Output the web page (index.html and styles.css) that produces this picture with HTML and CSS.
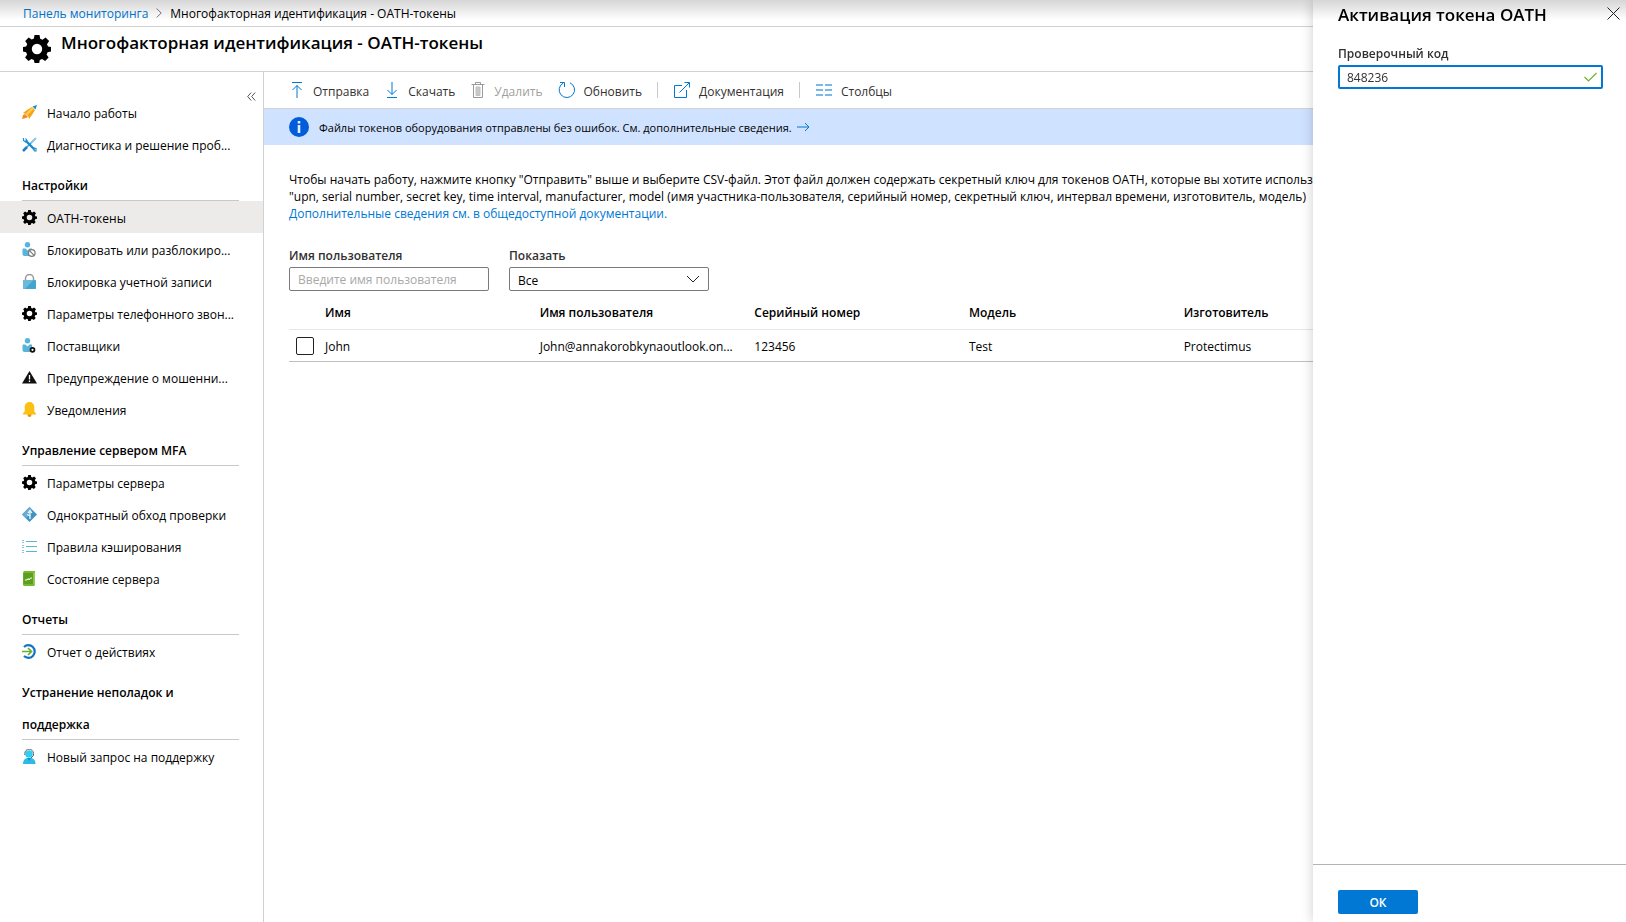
FILE: index.html
```html
<!DOCTYPE html>
<html lang="ru">
<head>
<meta charset="utf-8">
<title>Многофакторная идентификация - OATH-токены</title>
<link rel="stylesheet" href="styles.css">
</head>
<body>
<svg class="defs" width="0" height="0" aria-hidden="true">
  <defs>
    <symbol id="gear" viewBox="0 0 28 28">
      <path fill-rule="evenodd" d="M11.500 0h5l.7 3.700 2.300 1 3.100-2.100 3.500 3.500-2.100 3.100 1 2.300 3 .5v4.500l-3.400.8-1 2.300 2 3-3.500 3.500-3-2-2.300 1-.6 2.900h-4.600l-.8-3.100-2.300-1-3 2.100-3.400-3.500 2-3-1-2.300L0 16.500V12l3.200-.6 1-2.300-2-3 3.500-3.500 3 2 2.200-1zM14 8.800a5.200 5.200 0 1 0 0 10.400 5.200 5.200 0 0 0 0-10.400z"/>
    </symbol>
    <symbol id="person" viewBox="0 0 15 15">
      <circle cx="5.500" cy="2.800" r="2.700" fill="#59b4d9"/>
      <path d="M1 6.500h2.500l2 2 2-2H10v3L8 14H2.500Q.5 14 .5 12V7z" fill="#59b4d9"/>
    </symbol>
  </defs>
</svg>
<div class="page">
  <nav class="crumbs" aria-label="Навигация">
    <a href="#">Панель мониторинга</a>
    <svg width="6" height="10" viewBox="0 0 6 10" fill="none" stroke="#777"><path d="M.7.5 5.200 5 .7 9.500"/></svg>
    <span>Многофакторная идентификация - OATH-токены</span>
  </nav>
  <header class="title">
    <svg width="28" height="28"><use href="#gear"/></svg>
    <h1>Многофакторная идентификация - OATH-токены</h1>
  </header>
  <div class="body">
    <aside class="side">
      <button class="collapse" type="button" aria-label="Свернуть меню"><svg width="9" height="9" viewBox="0 0 9 9" fill="none" stroke="#555"><path d="M4.200.5.700 4.500l3.500 4M8.200.5 4.700 4.500l3.500 4"/></svg></button>
      <ul>
        <li><a href="#"><svg width="15" height="15" viewBox="0 0 15 15"><path d="M1 8l4-3 5-3 3 3-3 5-3 4-1-3-2-2z" fill="#faa21b"/><path d="M0 14l1-4 2-1 3 3-2 1z" fill="#f28a1c"/><path d="M5 9 11 3" stroke="#ffd34d" stroke-width="2"/><path d="M10.500 1.500 15 0l-1.500 4.500z" fill="#1f8fb8"/></svg><span>Начало работы</span></a></li>
        <li><a href="#"><svg width="15" height="15" viewBox="0 0 15 15" fill="none"><path d="M2 13 13 2" stroke="#3aa5dc" stroke-width="1.500"/><path d="M9.500 5.500 14 1" stroke="#8fc9e6" stroke-width="2"/><path d="M3.500 3.500l9 9" stroke="#1988d0" stroke-width="2.400"/><path d="M1.500 1v2.500l2 1.500L5 3.500 3.500 1.500M11.500 12l1 2h1.500v-2.500l-2-.5" stroke="#1f8ed2" stroke-width="1.200"/><path d="M1 14l4-4" stroke="#1b7fc9" stroke-width="2.500"/></svg><span>Диагностика и решение проб...</span></a></li>
      </ul>
      <h2>Настройки</h2>
      <ul>
        <li class="current"><a href="#" aria-current="page"><svg width="15" height="15"><use href="#gear"/></svg><span>OATH-токены</span></a></li>
        <li><a href="#"><svg width="15" height="15" viewBox="0 0 15 15"><use href="#person"/><circle cx="9.800" cy="11" r="3.300" fill="#fff" stroke="#7a7a7a" stroke-width="1.200"/><path d="M7.500 8.700l4.600 4.600" stroke="#7a7a7a" stroke-width="1.200"/></svg><span>Блокировать или разблокиро...</span></a></li>
        <li><a href="#"><svg width="15" height="15" viewBox="0 0 15 15"><path d="M3.500 7V4.500a4 4 0 0 1 8 0V7" fill="none" stroke="#999" stroke-width="1.500"/><path d="M1.500 6h12l.5.5v8l-.5.500h-12L1 14.500v-8z" fill="#3fa6d0"/><path d="M1.500 6h10L3 15H1.500L1 14.500v-8z" fill="#6bbadb"/></svg><span>Блокировка учетной записи</span></a></li>
        <li><a href="#"><svg width="15" height="15"><use href="#gear"/></svg><span>Параметры телефонного звон...</span></a></li>
        <li><a href="#"><svg width="15" height="15" viewBox="0 0 15 15"><use href="#person"/><circle cx="10.500" cy="11.800" r="2" fill="#fff" stroke="#111" stroke-width="1.700"/></svg><span>Поставщики</span></a></li>
        <li><a href="#"><svg width="15" height="15" viewBox="0 0 15 15"><path d="M7.500 1 15 13.500H0z" fill="#111"/><path d="M7.500 5v4.500M7.500 10.500V12" stroke="#fff" stroke-width="1.300"/></svg><span>Предупреждение о мошенни...</span></a></li>
        <li><a href="#"><svg width="15" height="15" viewBox="0 0 15 15"><circle cx="7.500" cy="13" r="2" fill="#e8960c"/><path d="M7.500 0a4.800 4.800 0 0 1 4.800 5v4.500L14 11.500v1H1v-1l1.700-2V5a4.800 4.800 0 0 1 4.800-5z" fill="#fcc014"/></svg><span>Уведомления</span></a></li>
      </ul>
      <h2>Управление сервером MFA</h2>
      <ul>
        <li><a href="#"><svg width="15" height="15"><use href="#gear"/></svg><span>Параметры сервера</span></a></li>
        <li><a href="#"><svg width="15" height="15" viewBox="0 0 15 15"><path d="M7.500 0 15 7.500 7.500 15 0 7.500z" fill="#3c94c4"/><path d="M7.500 0 0 7.500l4 4L10 2.500z" fill="#68acd2"/><path d="M8 12V5M6 6l2-2.500L10 6M8 9 5 7.500" stroke="#fff" fill="none" stroke-width="1.200"/></svg><span>Однократный обход проверки</span></a></li>
        <li><a href="#"><svg width="15" height="15" viewBox="0 0 15 15" fill="none" stroke="#59b4d9"><path d="M4 2.500h11M4 7.500h11M4 12.500h11"/><path d="M1 1v3M1 6v3M1 11v3" stroke-dasharray="1 1" stroke-width="1.500"/></svg><span>Правила кэширования</span></a></li>
        <li><a href="#"><svg width="15" height="15" viewBox="0 0 15 15"><path d="M1 1.500 2 0h11v14l-1 1H2l-1-1z" fill="#76b82a"/><path d="M1.500 2h10v11h-10z" fill="#5aa01e"/><path d="M12 1.500v12" stroke="#b5dc80"/><path d="M3 9h2l1.200-1.500L7 9l1.500-2H10" stroke="#fff" fill="none"/></svg><span>Состояние сервера</span></a></li>
      </ul>
      <h2>Отчеты</h2>
      <ul>
        <li><a href="#"><svg width="15" height="15" viewBox="0 0 15 15" fill="none" stroke-width="2.200"><path d="M2 3a6.300 6.300 0 1 1 0 9" stroke="#1073c6"/><path d="M0 7.500h9M6 4l3.500 3.500L6 11" stroke="#6bb02c" stroke-width="1.700"/></svg><span>Отчет о действиях</span></a></li>
      </ul>
      <h2>Устранение неполадок и<br>поддержка</h2>
      <ul>
        <li><a href="#"><svg width="15" height="15" viewBox="0 0 15 15"><path d="M1 15q0-5 4-6h4.500q4 1 4 6z" fill="#2cbbe6"/><circle cx="7" cy="5" r="3.800" fill="#32cdf5"/><path d="M2.800 6V4.500a4.300 4.300 0 0 1 8.700 0V6.500L9 9" stroke="#666" fill="none"/><path d="M5.500 9h3.500L7.200 12z" fill="#1490c8"/></svg><span>Новый запрос на поддержку</span></a></li>
      </ul>
    </aside>
    <main class="main">
      <div class="tools" role="toolbar">
        <button type="button"><svg width="16" height="18" viewBox="0 0 16 18" fill="none" stroke="#0078d4"><path d="M3 1.500h10M8 4.500V17M3.500 9 8 4.500 12.500 9"/></svg>Отправка</button>
        <button type="button"><svg width="16" height="18" viewBox="0 0 16 18" fill="none" stroke="#0078d4"><path d="M3 16.500h10M8 1v12.500M3.500 9 8 13.500 12.500 9"/></svg>Скачать</button>
        <button type="button" disabled><svg width="16" height="18" viewBox="0 0 16 18" fill="none" stroke="#999"><path d="M1.500 3.500h13M5.500 3V1.500h5V3M3.500 4v12.500h9V4"/><path d="M6 6h4v8.500H6z" fill="#c8c8c8" stroke="#c0c0c0"/></svg>Удалить</button>
        <button type="button"><svg width="18" height="18" viewBox="0 0 18 18" fill="none" stroke="#0078d4"><path d="M12 1.800A7.700 7.700 0 1 1 5.300 2M2 1.500h4.500V6"/></svg>Обновить</button>
        <i class="rule"></i>
        <button type="button"><svg width="18" height="18" viewBox="0 0 18 18" fill="none" stroke="#0078d4"><path d="M9 4.500H1.500v12h12V9M6.500 11.500 16.500 1.500M11.500 1.500h5v5"/></svg>Документация</button>
        <i class="rule"></i>
        <button type="button"><svg width="18" height="18" viewBox="0 0 18 18" fill="none" stroke="#7ab8ea" stroke-width="2"><path d="M1 4h7M1 9h7M1 14h7M10 4h7M10 9h7M10 14h7"/></svg>Столбцы</button>
      </div>
      <div class="notice" role="status">
        <svg width="20" height="20" viewBox="0 0 20 20"><circle cx="10" cy="10" r="10" fill="#015cda"/><path d="M8.700 8h2.600v8H8.700zM8.700 4h2.600v2.500H8.700z" fill="#e4eefc"/></svg>
        <a href="#">Файлы токенов оборудования отправлены без ошибок. См. дополнительные сведения.</a>
        <svg class="arrow" width="13" height="10" viewBox="0 0 13 10" fill="none" stroke="#0078d4"><path d="M0 5h12M8 1l4 4-4 4"/></svg>
      </div>
      <div class="content">
        <p>Чтобы начать работу, нажмите кнопку "Отправить" выше и выберите CSV-файл. Этот файл должен содержать секретный ключ для токенов OATH, которые вы хотите использовать.<br>"upn, serial number, secret key, time interval, manufacturer, model (имя участника-пользователя, серийный номер, секретный ключ, интервал времени, изготовитель, модель)<br><a href="#">Дополнительные сведения см. в общедоступной документации.</a></p>
        <form class="filters">
          <div class="field"><label for="user">Имя пользователя</label><input id="user" type="text" placeholder="Введите имя пользователя"></div>
          <div class="field"><label for="show">Показать</label><select id="show"><option>Все</option></select></div>
        </form>
        <table>
          <thead><tr><th class="pick"></th><th>Имя</th><th>Имя пользователя</th><th>Серийный номер</th><th>Модель</th><th>Изготовитель</th><th></th></tr></thead>
          <tbody><tr><td class="pick"><input type="checkbox" aria-label="Выбрать John"></td><td>John</td><td>John@annakorobkynaoutlook.on...</td><td>123456</td><td>Test</td><td>Protectimus</td><td></td></tr></tbody>
        </table>
      </div>
    </main>
  </div>
</div>
<section class="panel" aria-labelledby="panel-title">
  <header><h2 id="panel-title">Активация токена OATH</h2><button type="button" aria-label="Закрыть"><svg width="13" height="13" viewBox="0 0 13 13" stroke="#222"><path d="M.5.5l12 12M12.500.5l-12 12"/></svg></button></header>
  <div class="panel-body">
    <label for="code">Проверочный код</label>
    <div class="code"><input id="code" type="text" value="848236"><svg width="13" height="10" viewBox="0 0 13 10" fill="none" stroke="#6bb52c" stroke-width="1.200"><path d="M.5 5l4 4L12.500 1"/></svg></div>
  </div>
  <footer><button type="button">ОК</button></footer>
</section>
<div class="topshade"></div>
</body>
</html>
```

FILE: styles.css
```css
* { box-sizing: border-box; }
body {
  margin: 0;
  background: #fff;
  color: #000;
  font: 12px/17px "Open Sans", "Noto Sans", sans-serif;
  overflow: hidden;
}
button, input, select { font: inherit; color: inherit; }
button { border: 0; background: none; padding: 0; }
a { color: #0078d4; text-decoration: none; }
h1, h2, p, ul { margin: 0; padding: 0; }
ul { list-style: none; }
svg { flex: none; }
.defs { position: absolute; }

.page { display: flex; flex-direction: column; min-height: 100vh; }
.crumbs {
  display: flex;
  align-items: center;
  gap: 8px;
  height: 27px;
  padding: 0 23px;
  border-bottom: 1px solid #d2d2d2;
}
.title {
  display: flex;
  align-items: flex-start;
  gap: 10px;
  height: 45px;
  padding: 5px 23px 0;
  border-bottom: 1px solid #d2d2d2;
}
.title svg { margin-top: 3px; }
.title h1 { font-size: 17px; line-height: 22px; font-weight: 600; }

.body { display: flex; flex: 1; }
.side { flex: none; width: 264px; border-right: 1px solid #d2d2d2; }
.collapse {
  display: flex;
  justify-content: flex-end;
  align-items: flex-end;
  width: 256px;
  height: 29px;
  margin-bottom: -5px;
}
.side li a {
  display: flex;
  align-items: center;
  gap: 10px;
  height: 32px;
  padding: 2px 22px 0;
  color: #000;
}
.side li span { white-space: nowrap; }
.side li svg { margin-bottom: 2px; }
.side .current { background: #edebe9; }
.side h2 {
  margin: 10px 24px -2px 22px;
  font-size: 12px;
  line-height: 32px;
  font-weight: 600;
}
.side h2 + ul::before {
  content: "";
  display: block;
  height: 1px;
  margin: 0 24px 0 22px;
  background: #c8c8c8;
}

.main { flex: 1; min-width: 0; overflow: hidden; }
.tools {
  display: flex;
  align-items: center;
  gap: 15px;
  height: 37px;
  padding: 2px 25px 0;
  border-bottom: 1px solid #d2d2d2;
  color: #323130;
}
.tools button { display: flex; align-items: center; gap: 8px; }
.tools button svg { margin-bottom: 2px; }
.tools button:disabled { color: #a19f9d; }
.rule { width: 1px; height: 16px; margin-bottom: 2px; background: #c8c8c8; }
.notice {
  display: flex;
  align-items: center;
  height: 36px;
  padding: 0 25px;
  background: #cfe2ff;
  font-size: 11px;
}
.notice a { margin: 0 5px 0 10px; color: #000; }

.content { padding: 26px 0 0 25px; }
.content p { white-space: nowrap; line-height: 17px; }
.filters { display: flex; gap: 20px; margin-top: 24px; }
.field { display: flex; flex-direction: column; width: 200px; }
.field label, .panel label { line-height: 20px; font-weight: 600; color: #323130; }
.field label { margin-bottom: 1px; }
.field input, .field select {
  height: 24px;
  padding: 0 8px;
  border: 1px solid #7a7a7a;
  border-radius: 2px;
  background: #fff;
}
.field input::placeholder { color: #a8a8a8; opacity: 1; }
.field select {
  appearance: none;
  padding-top: 2px;
  background: url("data:image/svg+xml,%3Csvg xmlns='http://www.w3.org/2000/svg' width='14' height='8' fill='none' stroke='%23222'%3E%3Cpath d='M1 1l6 6 6-6'/%3E%3C/svg%3E") no-repeat right 8px center #fff;
}

table { width: 1324px; table-layout: fixed; border-collapse: collapse; }
th, td {
  padding: 0;
  text-align: left;
  white-space: nowrap;
}
th { height: 38px; padding-top: 5px; font-weight: 600; }
thead tr { border-bottom: 1px solid #e6e6e6; }
td { height: 32px; padding-top: 2px; }
tbody tr { border-bottom: 1px solid #c0c0c0; }
.pick { width: 36px; padding: 1px 0 0 7px; }
.pick input {
  display: block;
  appearance: none;
  width: 18px;
  height: 18px;
  margin: 0;
  border: 1px solid #222;
  border-radius: 2px;
}

.panel {
  position: fixed;
  top: 0;
  right: 0;
  bottom: 0;
  display: flex;
  flex-direction: column;
  width: 313px;
  background: #fff;
  box-shadow: 0 0 12px rgba(0, 0, 0, .2);
}
.panel header {
  display: flex;
  justify-content: space-between;
  align-items: center;
  height: 30px;
  padding: 0 6px 0 25px;
}
.panel header h2 { font-size: 17px; line-height: 22px; font-weight: 600; }
.panel-body { flex: 1; padding: 14px 23px 0 25px; }
.panel label { display: block; margin-bottom: 1px; }
.code {
  display: flex;
  align-items: center;
  height: 24px;
  padding: 0 4px 0 7px;
  border: 2px solid #0078d4;
  border-radius: 2px;
}
.code input { flex: 1; min-width: 0; padding: 0; border: 0; outline: 0; color: #323130; }
.panel footer { height: 58px; padding: 25px; border-top: 1px solid #b4b4b4; }
.panel footer button {
  width: 80px;
  height: 24px;
  border-radius: 2px;
  background: #0078d4;
  color: #fff;
  font-weight: 600;
}
.topshade {
  position: fixed;
  top: 0;
  left: 0;
  right: 0;
  height: 20px;
  background: linear-gradient(rgba(0, 0, 0, .16), rgba(0, 0, 0, 0));
  pointer-events: none;
}
```
